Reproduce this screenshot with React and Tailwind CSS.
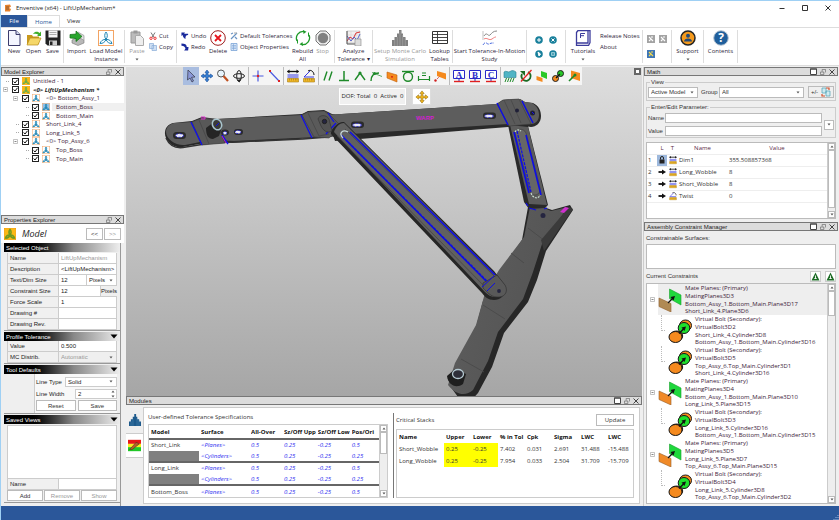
import React from "react";

const UI = "font-['Open_Sans','Noto_Sans',sans-serif]";
const TAHOMA = "font-['Liberation_Sans','Noto_Sans',sans-serif]";

/* ---------- small shared glyphs ---------- */

function Svg({ size = 16, box = 16, className = "", children }) {
  return (
    <svg width={size} height={size} viewBox={`0 0 ${box} ${box}`} fill="none" className={`block shrink-0 ${className}`} aria-hidden="true">
      {children}
    </svg>
  );
}

function Trefoil({ size = 8, bg = "#fff", edge = "#f3a464", color = "#1f86b4", weight = 1 }) {
  return (
    <Svg size={size}>
      <rect x="0.5" y="0.5" width="15" height="15" fill={bg} stroke={edge} />
      <g stroke={color} strokeWidth={weight}>
        <path d="M8 9.500C6.200 7 6.400 4 8 2c1.700 2 1.800 5 0 7.500Z" />
        <path d="M8 9.500c-1 2.700-3.200 4.100-6 4 .8-2.600 3-4.400 6-4Z" />
        <path d="M8 9.500c1 2.700 3.200 4.100 6 4-.8-2.600-3-4.400-6-4Z" />
      </g>
    </Svg>
  );
}

function Caret({ className = "" }) {
  return (
    <svg width="4" height="3" viewBox="0 0 4 3" className={`block shrink-0 ${className}`} aria-hidden="true">
      <path d="M0.500 0.500h3L2 2.500Z" fill="#555" />
    </svg>
  );
}

function WindowTools({ max }) {
  return (
    <span className="flex items-center gap-[3px]">
      {max && (
        <button type="button" aria-label="Maximize panel">
          <Svg size={7} box={7}><path d="M0.500 1h6v5.500h-6Z" stroke="#444" fill="#fff" /><path d="M0 1h7" stroke="#444" /></Svg>
        </button>
      )}
      <button type="button" aria-label="Float panel">
        <Svg size={6} box={7}><path d="M0.500 3.500h4v3h-4ZM2.500 3V0.500h4V4" stroke="#666" strokeWidth="0.800" /></Svg>
      </button>
      <button type="button" aria-label="Close panel">
        <Svg size={6} box={6}><path d="M0.500 0.500l5 5M5.500 0.500l-5 5" stroke="#444" /></Svg>
      </button>
    </span>
  );
}

function PanelTitle({ title, max }) {
  return (
    <div className={`flex h-[9px] shrink-0 items-center justify-between border border-[#777] bg-[#dcdcdc] px-[2px] text-[6px] leading-[8px] text-[#222] ${TAHOMA}`}>
      <h2>{title}</h2>
      <WindowTools max={max} />
    </div>
  );
}

function Select({ label, value, className = "", disabled }) {
  return (
    <span className={`relative flex items-center ${className}`}>
      <select aria-label={label} disabled={disabled} className="h-full w-full appearance-none bg-transparent pl-[2px] text-inherit outline-none">
        <option>{value}</option>
      </select>
      <Caret className="pointer-events-none absolute right-[3px]" />
    </span>
  );
}

function ScrollBar({ thumb }) {
  return (
    <div className="flex w-[8px] shrink-0 flex-col items-stretch border-l border-[#ccc] bg-[#eee]">
      <span className="flex h-[7px] items-center justify-center border border-[#bbb] bg-white">
        <Caret className="rotate-180" />
      </span>
      <span className={`border border-[#bbb] bg-white ${thumb}`} />
      <span className="flex-1" />
      <span className="flex h-[7px] items-center justify-center border border-[#bbb] bg-white">
        <Caret />
      </span>
    </div>
  );
}

/* ---------- ribbon ---------- */

const ribbonIcons = {
  new: <Svg><path d="M2.500 0.500h7.500l4 4v11h-11.500Z" fill="#f4f6ff" stroke="#3b3b6b" /><path d="M10 0.500v4h4" stroke="#3b3b6b" fill="#cfd6ee" /></Svg>,
  open: <Svg><path d="M1 5h5l1 1.500h6V14H1Z" fill="#c8981c" /><path d="M1 15l3-7h11l-3 7Z" fill="#f5d768" stroke="#b98d1c" strokeWidth="0.700" /><path d="M7 4c2-3 5-2.500 6.500-1L15 1.500V6h-4l1.300-1.300C11 3.500 9 3.500 7 4Z" fill="#3fae29" /></Svg>,
  save: <Svg><path d="M0.500 0.500h15v15h-13l-2-2Z" fill="#222" /><path d="M3.500 0.500h9v7h-9Z" fill="#f5f5f5" /><path d="M4.500 2.500h7M4.500 4.500h7" stroke="#999" strokeWidth="0.800" /><path d="M4 10.500h8v5H4Z" fill="#ccc" /><path d="M5 11.500h2.500v3.500H5Z" fill="#222" /></Svg>,
  import: <Svg><path d="M3 10l6-3 6 3v3l-6 2.500L3 13Z" fill="#b8b8b8" stroke="#777" strokeWidth="0.600" /><path d="M9 2l6 3.500V10" fill="#ddd" stroke="#888" strokeWidth="0.600" /><path d="M1 4.500l6-0.500V1l6 5.500-6 5V8.500L1 8Z" fill="#27a52c" stroke="#126b16" strokeWidth="0.700" /></Svg>,
  model: <Trefoil size={16} />,
  paste: <Svg><path d="M2 2h9v11H2Z" fill="#bbb" stroke="#999" /><path d="M4.500 0.500h4v3h-4Z" fill="#999" /><path d="M6.500 5.500h5l3 3v7h-8Z" fill="#eee" stroke="#aaa" /></Svg>,
  delete: <Svg><circle cx="8" cy="8" r="7.300" stroke="#9c1c1c" fill="#fff" /><path d="M5 5l6 6M11 5l-6 6" stroke="#e8141c" strokeWidth="1.800" /></Svg>,
  rebuild: <Svg><path d="M2 11a6.800 6.800 0 0 1 7-9.500M14 5a6.800 6.800 0 0 1-7 9.500" stroke="#1f9a2a" strokeWidth="1.300" /><path d="M8 0l3.500 1.800L8.500 4ZM8 16l-3.500-1.800L7.500 12Z" fill="#1f9a2a" /><path d="M13.500 2.500v4M2.500 9.500v4" stroke="#1f9a2a" /></Svg>,
  stop: <Svg><path d="M5 1h6l4 4v6l-4 4H5l-4-4V5Z" fill="#eee" stroke="#777" /><circle cx="8" cy="8" r="5.200" fill="#808080" /></Svg>,
  analyze: <Svg><path d="M1 1h13v12H1Z" fill="#f3f0f0" stroke="#bbb" strokeWidth="0.600" /><path d="M1 5h13M1 9h13M5 1v12M10 1v12" stroke="#ccc" strokeWidth="0.500" /><path d="M1 11l3-4 3 2 3-6 4-1" stroke="#d33" /><path d="M1 6l4 5 3-4 3 3 3-6" stroke="#56c" /><path d="M1 1v13h8" stroke="#555" /><path d="M9 9h6v7H9Z" fill="#ddd" stroke="#888" strokeWidth="0.600" /></Svg>,
  monte: <Svg><path d="M0 16v-6h2.500V7H5V3.500h2V0h2.500v3.500H11V7h2.500v3H16v6Z" fill="#808080" /><path d="M2.700 10v6M5.300 7v9M8 1v15M10.700 5v11M13.300 8v8" stroke="#aaa" strokeWidth="0.600" /></Svg>,
  lookup: <Svg><path d="M0.500 1.500h15v12h-15Z" fill="#fff" stroke="#333" /><path d="M0.500 4.500h15M0.500 7.500h15M0.500 10.500h15M5.500 1.500v12" stroke="#333" strokeWidth="0.900" /></Svg>,
  motion: <Svg><path d="M1 1v9" stroke="#999" strokeWidth="0.600" /><path d="M2 6c3-5 4 1 6-1s3-4 7-4" stroke="#888" /><path d="M2 9c3-2 5 2 8 0 2-1.500 3-2 4-2" stroke="#f08080" /><path d="M1 15c3-5 4 0 6-1s3-1 5-1" stroke="#4466dd" strokeDasharray="3 1" /></Svg>,
  tutorials: <Svg><path d="M1.500 2.500L3 0.500h12v12l-1.500 3h-12Z" fill="#fff" stroke="#3c3c9c" strokeWidth="1.300" /><path d="M13 1v12H2" stroke="#3c3c9c" strokeWidth="1.300" /><path d="M5.500 8V3.500H10M5.500 5.700H9" stroke="#3c3c9c" /></Svg>,
  support: <Svg><circle cx="8" cy="8" r="7" fill="#f59a1c" stroke="#252525" strokeWidth="1.500" /><circle cx="8" cy="5.700" r="2" fill="#234a78" /><path d="M4 11.500c0-4 8-4 8 0Z" fill="#234a78" /></Svg>,
  contents: <Svg><circle cx="8" cy="8" r="7.300" fill="#1f5f9c" stroke="#b9c6d4" /><text x="8" y="12.300" textAnchor="middle" fontSize="12" fontWeight="700" fill="#fff" fontFamily="Open Sans">?</text></Svg>,
};

function Big({ icon, lines, width, dim, drop }) {
  return (
    <button type="button" className={`flex shrink-0 flex-col items-center ${width} ${dim ? "text-[#999]" : "text-[#2f1f3c]"}`}>
      {ribbonIcons[icon]}
      <span className="mt-px flex flex-col items-center leading-[8px] whitespace-nowrap">
        {lines.map((l) => (
          <span key={l}>{l}</span>
        ))}
      </span>
      {drop && <Caret className="mt-[3px]" />}
    </button>
  );
}

function Small({ icon, text }) {
  return (
    <button type="button" className="flex h-[11px] items-center gap-[2px] text-left leading-[8px] whitespace-nowrap text-[#2f1f3c]">
      {icon}
      <span>{text}</span>
    </button>
  );
}

function Group({ width, children }) {
  return <div className={`flex shrink-0 items-start border-r border-[#ddd] ${width}`}>{children}</div>;
}

const cutIcon = <Svg size={8} box={8}><path d="M2 0.500l3 5M6 0.500l-3 5" stroke="#777" /><circle cx="2" cy="6.300" r="1.200" stroke="#e33" /><circle cx="6" cy="6.300" r="1.200" stroke="#e33" /></Svg>;
const copyIcon = <Svg size={8} box={8}><path d="M0.500 0.500h4v5h-4ZM3 2.500h4.500v5H3Z" fill="#cfe0f4" stroke="#8aaed8" strokeWidth="0.700" /></Svg>;
const undoIcon = <Svg size={8} box={9}><path d="M0.500 0.500h4L3.500 2H8v1.500C5.500 3.500 5 5 5 8 3 7 2 5.500 2 3.500L0.500 4.500Z" fill="#1a2a9c" /></Svg>;
const redoIcon = <Svg size={8} box={9}><path d="M0.500 0.500c4 0 6 1 6 4h2L8 8.500H3.500L5 6.500C5 4.500 3.500 3 0.500 3Z" fill="#1a2a9c" /></Svg>;
const tolIcon = <Svg size={8} box={8}><path d="M1 7l6-6M1 2l2-1M5 5l2 2" stroke="#6a94c4" strokeWidth="1.200" /><path d="M4 1h3" stroke="#aaa" /></Svg>;
const propIcon = <Svg size={8} box={8}><path d="M1 0.500h6v7H1Z" fill="#dbe8f8" stroke="#7aa3d6" strokeWidth="0.800" /><path d="M2 2.500h4M2 4h4M2 5.500h4M3.500 1v6" stroke="#7aa3d6" strokeWidth="0.600" /></Svg>;

function Disc({ label, children }) {
  return (
    <button type="button" aria-label={label}>
      <Svg size={8} box={8}><circle cx="4" cy="4" r="3.800" fill="#19809c" />{children}</Svg>
    </button>
  );
}

function Tile({ label, on }) {
  return (
    <button type="button" aria-label={label}>
      <Svg size={8} box={8}>
        <path d="M0 0h8v8H0Z" fill={on ? "#3f76b5" : "#a3a3a3"} />
        <path d="M2 2l4 4M4 2l2 0M2 6l2-2" stroke={on ? "#f8dc4a" : "#fff"} strokeWidth="1.100" />
      </Svg>
    </button>
  );
}

function Ribbon() {
  return (
    <div className="flex h-[39px] shrink-0 overflow-hidden border-y border-[#ddd] bg-white py-[2px] pl-[3px] text-[6px]">
      <Group width="w-[60px]">
        <Big icon="new" lines={["New"]} width="w-[20px]" />
        <Big icon="open" lines={["Open"]} width="w-[19px]" />
        <Big icon="save" lines={["Save"]} width="w-[19px]" />
      </Group>
      <Group width="w-[61px]">
        <Big icon="import" lines={["Import"]} width="w-[25px]" />
        <Big icon="model" lines={["Load Model", "Instance"]} width="w-[34px]" />
      </Group>
      <Group width="w-[52px]">
        <Big icon="paste" lines={["Paste"]} width="w-[24px]" dim drop />
        <div className="flex flex-col">
          <Small icon={cutIcon} text="Cut" />
          <Small icon={copyIcon} text="Copy" />
        </div>
      </Group>
      <Group width="w-[158px]">
        <div className="flex w-[29px] flex-col pl-[4px]">
          <Small icon={undoIcon} text="Undo" />
          <Small icon={redoIcon} text="Redo" />
        </div>
        <Big icon="delete" lines={["Delete"]} width="w-[24px]" />
        <div className="flex w-[62px] flex-col">
          <Small icon={tolIcon} text="Default Tolerances" />
          <Small icon={propIcon} text="Object Properties" />
        </div>
        <Big icon="rebuild" lines={["Rebuild", "All"]} width="w-[21px]" />
        <Big icon="stop" lines={["Stop"]} width="w-[19px]" dim />
      </Group>
      <Group width="w-[38px]">
        <Big icon="analyze" lines={["Analyze", "Tolerance ▾"]} width="w-[37px]" />
      </Group>
      <Group width="w-[80px]">
        <Big icon="monte" lines={["Setup Monte Carlo", "Simulation"]} width="w-[54px]" dim />
        <Big icon="lookup" lines={["Lookup", "Tables"]} width="w-[25px]" />
      </Group>
      <Group width="w-[74px]">
        <Big icon="motion" lines={["Start Tolerance-In-Motion", "Study"]} width="w-[73px]" />
      </Group>
      <Group width="w-[39px]">
        <div className="grid grid-cols-2 gap-[6px] pt-[6px] pl-[8px]">
          <Disc label="Add"><path d="M4 2v4M2 4h4" stroke="#fff" /></Disc>
          <Disc label="Remove"><path d="M2.500 2.500l3 3M5.500 2.500l-3 3" stroke="#fff" /></Disc>
          <Disc label="Pick"><path d="M3 2l2.500 2L4 6Z" fill="#fff" stroke="#fff" /></Disc>
          <Disc label="List"><path d="M2.500 2.500h3v3h-3ZM2.500 4h3" stroke="#bfe3ea" strokeWidth="0.700" /></Disc>
        </div>
      </Group>
      <Group width="w-[77px]">
        <Big icon="tutorials" lines={["Tutorials"]} width="w-[34px]" drop />
        <div className="flex flex-col">
          <Small text="Release Notes" />
          <Small text="About" />
        </div>
      </Group>
      <Group width="w-[29px]">
        <div className="grid grid-cols-2 gap-x-[4px] gap-y-[7px] pt-[5px] pl-[4px]">
          <Tile label="Tool one" />
          <Tile label="Tool two" />
          <Tile label="Tool three" on />
        </div>
      </Group>
      <Group width="w-[32px]">
        <Big icon="support" lines={["Support"]} width="w-[31px]" drop />
      </Group>
      <Group width="w-[34px]">
        <Big icon="contents" lines={["Contents"]} width="w-[33px]" />
      </Group>
    </div>
  );
}

/* ---------- left column ---------- */

const tree = [
  { pad: "pl-[10px]", name: "Untitled - 1", hot: true, gap: "pl-px" },
  { pad: "pl-[10px]", name: "<0> LiftUpMechanism *", hot: true, bold: true, node: true, gap: "pl-px" },
  { pad: "pl-[20px]", name: "<0> Bottom_Assy_1", node: true, gap: "pl-[4px]" },
  { pad: "pl-[30px]", name: "Bottom_Boss", sel: true, gap: "pl-[4px]" },
  { pad: "pl-[30px]", name: "Bottom_Main", gap: "pl-[4px]" },
  { pad: "pl-[20px]", name: "Short_Link_4", gap: "pl-[4px]" },
  { pad: "pl-[20px]", name: "Long_Link_5", gap: "pl-[4px]" },
  { pad: "pl-[20px]", name: "<0> Top_Assy_6", node: true, gap: "pl-[4px]" },
  { pad: "pl-[30px]", name: "Top_Boss", gap: "pl-[4px]" },
  { pad: "pl-[30px]", name: "Top_Main", gap: "pl-[4px]" },
];

function Expander({ className = "" }) {
  return <Svg size={5} box={5} className={className}><path d="M0.500 0.500h4v4h-4Z" fill="#fff" stroke="#aaa" strokeWidth="0.700" /><path d="M1.500 2.500h2" stroke="#555" strokeWidth="0.700" /></Svg>;
}

function ModelExplorer() {
  return (
    <section className="flex h-[148px] shrink-0 flex-col">
      <PanelTitle title="Model Explorer" />
      <ul className="grid min-h-0 flex-1 auto-rows-fr grid-cols-1 content-start bg-white pt-px pb-[52px] text-[6px] text-[#3c2238]">
        {tree.map((t) => (
          <li key={t.name} className={`relative flex items-center ${t.pad}`}>
            {t.node ? (
              <Expander className="-ml-[8px] mr-[3px]" />
            ) : (
              <span className="-ml-[5px] mr-[2px] w-[3px] border-t border-dotted border-[#aaa]" />
            )}
            <label className={`flex min-w-0 flex-1 items-center leading-[8px] whitespace-nowrap ${t.bold ? "font-bold italic text-[#222]" : ""}`}>
              <span className="relative mx-px size-[7px] shrink-0">
                <input type="checkbox" defaultChecked className="block size-[7px] appearance-none border border-[#222] bg-white" />
                <Svg size={7} box={7} className="pointer-events-none absolute inset-0"><path d="M1.700 3.500l1.300 1.500 2.500-3.200" stroke="#111" /></Svg>
              </span>
              <span className="ml-[2px] shrink-0">
                {t.hot ? <Trefoil size={8} bg="#fcb813" edge="#f5a000" color="#5fae50" weight={2} /> : <Trefoil size={8} bg={t.sel ? "#8fc0e8" : "#fff"} weight={2} />}
              </span>
              <span className={`ml-[2px] flex-1 ${t.gap} ${t.sel ? "bg-[#f0f0f0]" : ""}`}>{t.name}</span>
            </label>
          </li>
        ))}
      </ul>
    </section>
  );
}

function Band({ title, fold }) {
  return (
    <div className="flex h-[9px] shrink-0 items-center justify-between bg-linear-to-r from-black from-20% via-[#888] via-60% to-[#eee] px-[2px] leading-[8px] text-white">
      <h3>{title}</h3>
      {fold && <svg width="8" height="5" viewBox="0 0 8 5" aria-hidden="true"><path d="M0.500 0.500h7L4 4.500Z" fill="#000" /></svg>}
    </div>
  );
}

function Prop({ label, value, dim, extra, children }) {
  return (
    <div className="flex h-[11px] shrink-0 items-stretch border-b border-[#ccc]">
      <label htmlFor={`prop-${label}`} className="flex w-[52px] shrink-0 items-center border-x border-[#ccc] bg-[#f0f0f0] pl-[2px]">{label}</label>
      {children || (
        <input id={`prop-${label}`} defaultValue={value} disabled={dim} className={`min-w-0 flex-1 border-r border-[#ccc] bg-white pl-[2px] ${dim ? "text-[#999]" : ""}`} />
      )}
      {extra}
    </div>
  );
}

function PushButton({ children, dim, className = "" }) {
  return (
    <button type="button" className={`border border-[#bbb] bg-white text-center leading-[8px] ${dim ? "text-[#999]" : "text-[#333]"} ${className}`}>
      {children}
    </button>
  );
}

function PropertiesExplorer() {
  return (
    <section className="flex min-h-0 flex-1 flex-col">
      <PanelTitle title="Properties Explorer" />
      <div className={`flex min-h-0 flex-1 flex-col bg-[#efefef] text-[6px] leading-[8px] text-[#222] ${TAHOMA}`}>
        <div className="flex h-[19px] shrink-0 items-center bg-white pr-[3px] pl-[3px]">
          <Trefoil size={12} bg="#fcb813" edge="#f5a000" color="#6f9a20" weight={2} />
          <span className={`ml-[6px] flex-1 text-[9px] italic ${UI}`}>Model</span>
          <PushButton className="h-[12px] w-[17px]">&lt;&lt;</PushButton>
          <PushButton dim className="ml-px h-[12px] w-[17px]">&gt;&gt;</PushButton>
        </div>
        <div className="mr-[3px] ml-[3px] flex min-h-0 flex-1 flex-col gap-px border-r border-[#999] pb-[3px]">
          <div className="border-b border-[#999]">
            <Band title="Selected Object" />
            <div className="mx-[3px] mt-px">
              <Prop label="Name" value="LiftUpMechanism" dim />
              <Prop label="Description" value="<LiftUpMechanism>" />
              <Prop label="Text/Dim Size" value="12" extra={<Select label="Text unit" value="Pixels" className="w-[30px] border-r border-[#ccc] bg-white" />} />
              <Prop label="Constraint Size" value="12" extra={<span className="w-[16px] self-center text-center">Pixels</span>} />
              <Prop label="Force Scale" value="1" />
              <Prop label="Drawing #" value="" />
              <Prop label="Drawing Rev." value="" />
            </div>
          </div>
          <div className="border-b border-[#999]">
            <Band title="Profile Tolerance" fold />
            <div className="mx-[3px]">
              <Prop label="Value" value="0.500" />
              <Prop label="MC Distrib.">
                <Select label="MC Distrib." value="Automatic" disabled className="flex-1 border-r border-[#ccc] text-[#999]" />
              </Prop>
            </div>
          </div>
          <div className="border-b border-[#999]">
            <Band title="Tool Defaults" fold />
            <div className="mr-[3px] ml-[30px] flex flex-col gap-px border-l border-[#ccc] bg-[#f8f8f8] py-[2px] pl-px">
              <div className="flex h-[11px] items-center">
                <span className="w-[29px]">Line Type</span>
                <Select label="Line Type" value="Solid" className="h-[10px] flex-1 border border-[#ccc] bg-white" />
              </div>
              <div className="flex h-[11px] items-center">
                <label htmlFor="lw" className="w-[39px]">Line Width</label>
                <input id="lw" defaultValue="2" className="h-[10px] min-w-0 flex-1 border border-[#ccc] bg-white pl-[2px]" />
                <span className="-ml-[6px] mr-[2px] flex flex-col gap-[2px]"><Caret className="rotate-180" /><Caret /></span>
              </div>
              <div className="flex h-[11px] gap-[2px]">
                <PushButton className="flex-1">Reset</PushButton>
                <PushButton className="flex-1">Save</PushButton>
              </div>
            </div>
          </div>
          <div className="flex min-h-0 flex-1 flex-col border-b border-[#999]">
            <Band title="Saved Views" fold />
            <div className="mx-[3px] mt-px flex min-h-0 flex-1 flex-col pb-px">
              <div className="min-h-0 flex-1 border border-[#ccc] bg-white" />
              <Prop label="Name" value="" />
              <div className="flex h-[11px] shrink-0 gap-px">
                <PushButton className="flex-1">Add</PushButton>
                <PushButton dim className="flex-1">Remove</PushButton>
                <PushButton dim className="flex-1">Show</PushButton>
              </div>
            </div>
          </div>
        </div>
      </div>
    </section>
  );
}

/* ---------- viewport ---------- */

const datum = (c) => (
  <>
    <path d="M2.500 2.500h11v8h-11Z" fill="#fff" stroke="#2828c8" />
    <text x="8" y="9.800" textAnchor="middle" fontSize="9" fontWeight="700" fill="#2828c8" fontFamily="Liberation Serif">{c}</text>
    <path d="M8 10.500v3" stroke="#2828c8" />
    <path d="M3 13.500h10" stroke="#e02020" strokeWidth="1.400" />
  </>
);
const ruler = <path d="M2.500 10.500h11v3.500h-11ZM4.500 10.500v2M6.500 10.500v2M8.500 10.500v2M10.500 10.500v2M12 10.500v2" fill="#f0b828" stroke="#a67a10" strokeWidth="0.600" />;

const tools = [
  ["Select", <><path d="M5 2l7 7-3.500 0.300L10.500 13l-1.500 1-2-4-2.500 2Z" fill="#8a98d8" stroke="#334" strokeWidth="0.700" /></>, "on"],
  ["Pan", <path d="M8 2l2 2.500H9V7h2.500V6L14 8l-2.500 2V9H9v2.500h1L8 14l-2-2.500h1V9H4.500v1L2 8l2.500-2v1H7V4.500H6Z" fill="#3a80d0" stroke="#1a4f9c" strokeWidth="0.600" />],
  ["Zoom", <><circle cx="6" cy="5.500" r="3.500" stroke="#555" fill="#e8f4fc" /><path d="M8.500 8l4.500 5" stroke="#c05020" strokeWidth="2.200" /></>],
  ["Rotate", <><ellipse cx="8" cy="8" rx="2.300" ry="5.500" stroke="#222" /><ellipse cx="8" cy="8" rx="5.500" ry="2.300" stroke="#222" /><path d="M6 12l2.500 2.500L10 11Z" fill="#222" /></>, "sep"],
  ["Point", <><path d="M8 2.500v11M2.500 8h11" stroke="#4a5ae0" strokeWidth="1.200" /><circle cx="8" cy="8" r="1.200" fill="#e02020" /></>],
  ["Line", <><path d="M4 3.500l8.500 9" stroke="#4a5ae0" strokeWidth="1.200" /><path d="M3 2h2v2H3ZM12 12h2v2h-2Z" fill="#e02020" /></>, "sep"],
  ["Dimension", <><path d="M2.500 3.500h11" stroke="#111" strokeWidth="1.300" /><path d="M4.500 1.500L2 3.500l2.500 2ZM11.500 1.500L14 3.500l-2.500 2Z" fill="#111" /><path d="M2.500 7h11M2.500 9h11" stroke="#3a3ae0" />{ruler}</>],
  ["Angle", <><path d="M3 9h10M3 9l6-6" stroke="#3a3ae0" /><path d="M7 3c3-2 6 1 6 4" stroke="#111" />{ruler}</>, "sep"],
  ["Parallel", <path d="M4 12.500l3-9M9 12.500l3-9" stroke="#1f8a2a" strokeWidth="1.400" />],
  ["Perpendicular", <path d="M8 3v9M3 12.500h10" stroke="#1f8a2a" strokeWidth="1.500" />],
  ["Coincident", <><path d="M3 12l5-7 5 7" stroke="#1f8a2a" strokeWidth="1.400" /><circle cx="8" cy="5" r="1.600" fill="#1f8a2a" /></>],
  ["Tangent", <><path d="M3 13c0-5 2-8 8-8" stroke="#1f8a2a" strokeWidth="1.400" /><path d="M4 4.500l10 4" stroke="#1f8a2a" strokeWidth="0.700" /><circle cx="6.500" cy="5.500" r="1.500" fill="#1f8a2a" /></>],
  ["Plane", <><path d="M3 4l10 3v7L3 10Z" fill="#f58a1e" stroke="#c0600c" strokeWidth="0.600" /><circle cx="8" cy="8.800" r="0.900" fill="#d01010" /></>],
  ["Circle", <><path d="M2 3.500h12" stroke="#1f8a2a" strokeWidth="1.400" /><circle cx="8" cy="8.800" r="4.500" stroke="#1f8a2a" strokeWidth="1.400" /></>],
  ["Equal", <path d="M2.500 8v5M13.500 8v5M2.500 11.500h11M6 5h4M6 7.500h4" stroke="#1f8a2a" strokeWidth="1.200" />],
  ["Plane point", <><path d="M5 3l9 2.500v6L5 8Z" fill="#f58a1e" /><circle cx="3.500" cy="12.500" r="1.200" fill="#d02020" /><path d="M5 11l3-3" stroke="#d02020" strokeDasharray="1 1" /></>, "sep"],
  ["Datum A", datum("A")],
  ["Datum B", datum("B")],
  ["Datum C", datum("C"), "sep"],
  ["Ground", <><path d="M2 4c2-2 4 1 6-0.500s4-1 6 0.500v5.500H2Z" fill="#4fb4c4" stroke="#2a7f90" strokeWidth="0.600" /><path d="M3 14l1.500-4M5.500 14L7 10M8 14l1.500-4M10.500 14l1.500-4" stroke="#1f8a2a" /></>],
  ["No rotate", <><path d="M4 6a4.600 4.600 0 1 0 6-2" stroke="#1c6b24" strokeWidth="1.800" /><path d="M2 3h5v5Z" fill="#1c6b24" /><path d="M3 13.500L13.500 2" stroke="#e02020" strokeWidth="1.300" /></>],
  ["Mate", <><path d="M7 3l6 2v6L7 8.500Z" fill="#28c828" /><path d="M2.500 8l6 2v4l-6-2Z" fill="#f58a1e" /></>],
  ["Bolt", <><circle cx="5.500" cy="10.500" r="3" fill="#f58a1e" stroke="#222" /><circle cx="10.500" cy="5.500" r="3" fill="#28c828" stroke="#222" /><path d="M6 10l4-4" stroke="#111" strokeWidth="1.300" /></>],
  ["Axis", <><path d="M5 2.500l9 2.500v8L5 10Z" fill="#f58a1e" /><path d="M3 13l6-6" stroke="#1f8a2a" strokeWidth="1.600" /><circle cx="9" cy="7" r="1.500" fill="#1f8a2a" /></>],
];

function Mechanism() {
  return (
    <svg viewBox="126 67 516 329" preserveAspectRatio="xMinYMin slice" className="absolute inset-0 h-full w-full" role="img" aria-label="Lift mechanism model">
      <defs>
        <linearGradient id="arm" x1="0" y1="0" x2="1" y2="0.600">
          <stop offset="0" stopColor="#606060" />
          <stop offset="1" stopColor="#525252" />
        </linearGradient>
      </defs>
      {/* main rail, left section */}
      <path d="M165 133c0-6 4-9 8-10l19-2 10-4 15 2 85-5 6-3 16-1 8 4 8 2v20l-25 2-83 5-22-1-27 5c-10 2-19-7-18-15Z" fill="#282828" />
      <path d="M166 132c0-5 4-8 8-9l18-1 10-4 15 1 85-4 6-3 16-1 8 4 6 1v19l-21 2-83 4-24-1-25 5c-9 1-19-6-19-13Z" fill="#5c5c5c" />
      {/* main rail, right section */}
      <path d="M326 115l171-11 6-4 17-1 5 3 8 1c6 3 8 8 8 13 0 7-5 11-10 11l-7-1-16 1-173 14Z" fill="#2a2a2a" />
      <path d="M326 115l171-11 6-4 17-1 5 3 7 1c5 3 7 7 7 12 0 6-4 9-8 9l-7-1-16 1-173 11Z" fill="#5d5d5d" />
      <path d="M166 138c4 9 11 11 20 9l25-4 92-4 25-2" stroke="#333" fill="none" strokeWidth="1.500" />
      {/* left bracket */}
      <path d="M192 122l10-4 13 2 10 23-23 2Z" fill="#585858" stroke="#3a3a3a" strokeWidth="0.600" />
      <path d="M199 120l10 24" stroke="#444" strokeWidth="0.700" />
      <path d="M191 122l11 23M222 135l6 9" stroke="#1010e8" strokeWidth="1.400" />
      <path d="M222 136l4 7" stroke="#c020c0" />
      <path d="M201 117h4v2h-4" stroke="#e030d0" fill="none" />
      {/* round boss */}
      <path d="M206 128l8-6 8 5-3 9-6 3c-5 0-7-4-7-11Z" fill="#252525" />
      <ellipse cx="217" cy="124.500" rx="4.500" ry="5.500" fill="#3a3a3a" stroke="#a9c4cc" strokeWidth="1.500" transform="rotate(-25 217 124.500)" />
      <path d="M216 126l3-3" stroke="#1010e8" />
      {/* slots */}
      <g fill="#2b2b2b">
        <rect x="173" y="132" width="13" height="7" rx="3.500" />
        <ellipse cx="225" cy="132.500" rx="4" ry="3" />
        <rect x="234" y="129" width="9" height="6" rx="3" />
        <rect x="351" y="121.500" width="13" height="6.500" rx="3" />
        <rect x="483" y="112.500" width="13" height="6.500" rx="3" />
      </g>
      <g fill="#e8e8f8" stroke="#1010e8" strokeWidth="0.700" strokeDasharray="2 1.500">
        <ellipse cx="179.500" cy="135.500" rx="4" ry="1.800" />
        <ellipse cx="225" cy="133" rx="2" ry="1.500" />
        <ellipse cx="238" cy="132" rx="3" ry="1.600" />
        <ellipse cx="357" cy="125" rx="4.500" ry="1.600" />
        <ellipse cx="489" cy="116" rx="4.500" ry="1.600" />
      </g>
      {/* centre bracket */}
      <path d="M302 115l6-3 16-1 7 5 11 11-13 11-15-1Z" fill="#5a5a5a" stroke="#3b3b3b" strokeWidth="0.600" />
      <path d="M308 113l11 23 10-2" stroke="#444" fill="none" strokeWidth="0.700" />
      <path d="M301 115l11 23M328 113l6 9M326 134l10-11" stroke="#1010e8" strokeWidth="1.300" />
      {/* lower arm */}
      <path d="M528 207l7-3 17 6 18-5 3 5-27 41-9 29-9 22-24 31-12 34-14 26c-6 8-13 8-20 4l-8-11 4-17 21-38 8-30 14-24 25-37Z" fill="#272727" />
      <path d="M530 207l7-2 14 6 17-4-26 37-9 28-10 27-25 33-10 29-15 29c-7 6-16 6-25-5l7-22 21-38 9-32 14-23 25-33Z" fill="url(#arm)" />
      <path d="M528 228l17 13M511 253l13 10M483 305l22 14M461 359l23 13" stroke="#484848" strokeWidth="0.800" />
      <path d="M541 240l28-33 4 2-29 42Z" fill="#3b3b3b" />
      <circle cx="543" cy="215.500" r="2.500" fill="#252540" />
      <path d="M560 212l5-5 4 1-5 5Z" fill="#d030d0" />
      {/* long link */}
      <path d="M331 134c-1-4 7-13 13-12l150 149 10 13c4 8-2 16-10 16-6 0-9-3-12-7Z" fill="#262626" />
      <path d="M334 132c1-4 5-9 10-9l149 149 11 13c3 6-1 12-8 12-5 0-8-2-11-5Z" fill="#606060" />
      <path d="M345 129l151 149M337 136l150 153" stroke="#424242" strokeWidth="0.700" />
      <path d="M350 132l145 143M341 135l147 148" stroke="#0d0de6" strokeWidth="1.500" />
      <path d="M346 140l141 141" stroke="#0d0de6" strokeWidth="1.300" strokeDasharray="3 1" />
      <path d="M343 138c-5-5 0-9 5-6" stroke="#c8d8d8" strokeWidth="1.200" fill="none" />
      <path d="M318 119c1-4 8-5 11 0l3 12c-5 3-9-1-11-5Z" fill="#535353" stroke="#333" strokeWidth="0.600" />
      <circle cx="324.500" cy="121.500" r="2.200" fill="#252540" stroke="#222" />
      <path d="M483 283l14-8 8 10c4 7-1 13-8 12-6 0-10-5-14-9Z" fill="#595959" stroke="#333" strokeWidth="0.700" />
      <path d="M482 287l12-11M487 291l8-8" stroke="#0d0de6" />
      <circle cx="499" cy="291" r="1.900" fill="#252540" />
      {/* short link */}
      <path d="M508 125l20 1 20 79-3 3-16 1-5-7Z" fill="#292929" />
      <path d="M510 125l18 2 19 78-18-1Z" fill="#5c5c5c" />
      <path d="M515 133c1-5 9-5 11 0l14 55c1 8-8 9-10 4Z" fill="#666" stroke="#444" strokeWidth="0.700" />
      <path d="M514 132l15 61M526 135l15 60" stroke="#0d0de6" strokeWidth="1.600" />
      <path d="M517 131l14 61" stroke="#0d0de6" strokeWidth="1.200" strokeDasharray="3 1" />
      <path d="M515 132c1-2 3-3 6-1M531 193c2 6 8 6 9 2" stroke="#c8dcd0" strokeWidth="1.200" fill="none" strokeDasharray="2 1" />
      <path d="M526 203l2 3M529 208l7 2M544 209l3-1" stroke="#0d0de6" strokeWidth="1.300" />
      {/* right bracket */}
      <path d="M497 104l6-4 16-1 12 25-22 2Z" fill="#5a5a5a" stroke="#404040" strokeWidth="0.600" />
      <path d="M504 100l11 24M511 100l10 23" stroke="#454545" strokeWidth="0.700" />
      <path d="M497 103l11 22M522 101l11 22" stroke="#0d0de6" strokeWidth="1.500" />
      <circle cx="517" cy="110.500" r="2" fill="#202038" />
      <circle cx="532.500" cy="113" r="2.500" fill="#202038" />
      <path d="M532 112l2 2" stroke="#1010e8" />
      {/* lower boss */}
      <path d="M447 376l8-7 11 5-3 10c-7 5-15 1-16-8Z" fill="#1e1e1e" />
      <ellipse cx="458" cy="374" rx="5.500" ry="4.500" fill="#2e2e38" stroke="#b4c8d0" strokeWidth="1.300" />
      <text x="416" y="120" fontSize="6" fontWeight="700" fill="#d020d0" fontFamily="Liberation Sans">WARP</text>
    </svg>
  );
}

function Viewport() {
  return (
    <section className="relative min-h-0 flex-1 overflow-hidden bg-linear-to-b from-[#dedede] to-[#a6a6a6]">
      <Mechanism />
      <div className="relative flex items-start pl-[57px]">
        <div className="flex items-center bg-[#f5f5f5]">
          {tools.map(([label, art, mode]) => (
            <button key={label} type="button" aria-label={label} className={`py-px ${mode === "on" ? "bg-[#a9bde0]" : ""} ${mode === "sep" ? "mr-px border-r border-[#bbb] pr-px" : ""}`}>
              <Svg>{art}</Svg>
            </button>
          ))}
        </div>
        <button type="button" aria-label="Restore view" className="mt-px mr-px ml-auto size-[7px] border-2 border-[#666] bg-white" />
      </div>
      <div className="relative flex items-start gap-[6px] pt-[3px] pl-[213px]">
        <output className="flex h-[17px] w-[67px] items-center justify-center border border-white bg-[#f0f0f0] text-[6px] whitespace-nowrap text-[#222]">
          DOF: Total&nbsp; 0&nbsp; Active&nbsp; 0
        </output>
        <button type="button" aria-label="Move part" className="flex h-[17px] w-[19px] items-center justify-center border border-[#ddd] bg-white">
          <Svg size={14}>
            <path d="M8 1l2.500 3H9v3h3V5.500L15 8l-3 2.500V9H9v3h1.500L8 15l-2.500-3H7V9H4v1.500L1 8l3-2.500V7h3V4H5.500Z" fill="#f4b61c" stroke="#8a6a10" strokeWidth="0.600" />
          </Svg>
        </button>
      </div>
    </section>
  );
}

/* ---------- modules ---------- */

const specs = [
  ["Short_Link", "<Planes>", "0.5", "0.25", "-0.25", "0.5"],
  ["", "<Cylinders>", "0.5", "0.25", "-0.25", "0.25"],
  ["Long_Link", "<Planes>", "0.5", "0.25", "-0.25", "0.5"],
  ["", "<Cylinders>", "0.5", "0.25", "-0.25", "0.25"],
  ["Bottom_Boss", "<Planes>", "0.5", "0.25", "-0.25", "0.5"],
];

const stacks = [
  ["Short_Wobble", "0.25", "-0.25", "7.402", "0.031", "2.691", "31.488", "-15.488"],
  ["Long_Wobble", "0.25", "-0.25", "7.954", "0.033", "2.504", "31.709", "-15.709"],
];

function Modules() {
  return (
    <section className="flex h-[110px] shrink-0 flex-col bg-[#efefef]">
      <PanelTitle title="Modules" max />
      <div className="flex min-h-0 flex-1 pt-[2px] pr-[2px] pb-[2px]">
        <div className="flex w-[17px] shrink-0 flex-col items-center">
          <button type="button" aria-label="Histogram" className="flex h-[26px] w-full items-center justify-center">
            <Svg size={12}><path d="M0 16v-6h2.500V7H5V3.500h2V0h2.500v3.500H11V7h2.500v3H16v6Z" fill="#1d5a8c" /><path d="M2.700 10v6M5.300 7v9M10.700 5v11M13.300 8v8" stroke="#5a93bd" strokeWidth="0.600" /></Svg>
          </button>
          <button type="button" aria-label="Tolerances" className="flex h-[25px] w-full items-center justify-center border-y border-[#ccc] bg-white">
            <Svg size={13}><path d="M0 1h16v5H0Z" fill="#e81818" /><path d="M0 6h16v4H0Z" fill="#f8ee20" /><path d="M0 10h16v5H0Z" fill="#20c828" /><path d="M2 13l8-9 4 2-9 7Z" fill="#b0602c" stroke="#5a2c10" strokeWidth="0.700" /></Svg>
          </button>
        </div>
        <div className="flex min-w-0 flex-1 border border-[#ccc] bg-white text-[6px] text-[#333]">
          <div className="flex min-w-0 flex-1 flex-col pt-[5px] pr-[5px] pb-[5px] pl-[4px]">
            <h3 className="h-[11px] leading-[8px] whitespace-nowrap">User-defined Tolerance Specifications</h3>
            <div className="flex min-h-0 flex-1 border border-[#ccc]">
              <table className="h-full flex-1 table-fixed border-collapse text-left leading-[8px]">
                <colgroup>
                  <col className="w-[50px]" /><col className="w-[50px]" /><col className="w-[33px]" /><col className="w-[33px]" /><col className="w-[33px]" /><col />
                </colgroup>
                <thead>
                  <tr className="h-[14px] border-b-2 border-[#666] text-[#111]">
                    {["Model", "Surface", "All-Over", "Sz/Off Upp", "Sz/Off Low", "Pos/Ori"].map((h) => (
                      <th key={h} className="pl-[2px] font-bold whitespace-nowrap"><span className="block overflow-hidden">{h}</span></th>
                    ))}
                  </tr>
                </thead>
                <tbody>
                  {specs.map((r, i) => (
                    <tr key={i} className={r[0] ? "" : "border-b-2 border-[#666]"}>
                      {r.map((c, j) => (
                        <td key={j} className={`pl-[2px] ${j ? "text-[#3030f0] italic" : c ? "" : "bg-[#808080]"}`}>{c}</td>
                      ))}
                    </tr>
                  ))}
                </tbody>
              </table>
              <ScrollBar thumb="h-[22px]" />
            </div>
          </div>
          <div className="my-[5px] w-px shrink-0 bg-[#777]" />
          <div className="flex w-[245px] shrink-0 flex-col pt-[6px] pr-[5px] pb-[5px] pl-[2px]">
            <div className="mb-[3px] flex h-[12px] items-center justify-between">
              <h3>Critical Stacks</h3>
              <PushButton className="h-[12px] w-[38px]">Update</PushButton>
            </div>
            <div className="min-h-0 flex-1 border border-[#ccc]">
              <table className="w-full table-fixed text-left leading-[8px]">
                <colgroup>
                  <col className="w-[47px]" /><col span="7" />
                </colgroup>
                <thead>
                  <tr className="h-[13px] text-[#111]">
                    {["Name", "Upper", "Lower", "% in Tol", "Cpk", "Sigma", "LWC", "LWC"].map((h, i) => (
                      <th key={i} className="pl-[2px] font-bold whitespace-nowrap">{h}</th>
                    ))}
                  </tr>
                </thead>
                <tbody>
                  {stacks.map((r) => (
                    <tr key={r[0]} className="h-[12px]">
                      {r.map((c, j) => (
                        <td key={j} className={`pl-[2px] ${j === 1 || j === 2 ? "bg-[#ffff00]" : ""}`}>{c}</td>
                      ))}
                    </tr>
                  ))}
                </tbody>
              </table>
            </div>
          </div>
        </div>
      </div>
    </section>
  );
}

/* ---------- right column ---------- */

const params = [
  ["1", "lock", "Dim1", "355.508857368"],
  ["2", "arrow", "Long_Wobble", "8"],
  ["3", "arrow", "Short_Wobble", "8"],
  ["4", "arrow", "Twist", "0"],
];

function MathPanel() {
  return (
    <section className="flex h-[155px] shrink-0 flex-col">
      <PanelTitle title="Math" max />
      <div className={`flex min-h-0 flex-1 flex-col px-[2px] pt-[2px] pb-[3px] text-[6px] leading-[8px] text-[#333] ${TAHOMA}`}>
        <fieldset className="h-[23px] shrink-0 border border-[#ccc]">
          <legend className="ml-[3px] px-px leading-[8px]">View</legend>
          <div className="flex h-[12px] items-center px-px">
            <Select label="View" value="Active Model" className="h-[11px] w-[50px] border border-[#bbb] bg-white" />
            <span className="ml-[3px] w-[18px]">Group</span>
            <Select label="Group" value="All" className="h-[11px] flex-1 border border-[#bbb] bg-white" />
            <span className="ml-[4px] flex h-[12px] w-[26px] items-center justify-center gap-[3px] border border-[#bbb]">
              <button type="button">+/-</button>
              <button type="button" aria-label="Swap"><Svg size={10} box={10}><path d="M1 1h4v5H1ZM5 4h4v5H5Z" fill="#cfeaf0" stroke="#4aa0b4" strokeWidth="0.700" /><path d="M5 1h3v2M4 9H1V7" stroke="#d0502c" strokeWidth="1.200" /></Svg></button>
            </span>
          </div>
        </fieldset>
        <fieldset className="mt-[2px] h-[35px] shrink-0 border border-[#ccc]">
          <legend className="ml-[3px] px-px leading-[8px]">Enter/Edit Parameter:</legend>
          <div className="flex items-center gap-[2px] px-px pt-[2px]">
            <div className="flex flex-1 flex-col gap-[3px]">
              {["Name", "Value"].map((n) => (
                <label key={n} className="flex h-[10px] items-center">
                  <span className="w-[17px]">{n}</span>
                  <input className="h-[10px] min-w-0 flex-1 border border-[#bbb] bg-white px-[2px]" />
                </label>
              ))}
            </div>
            <button type="button" aria-label="Recent" className="flex size-[10px] items-center justify-center border border-[#bbb] bg-white"><Caret /></button>
          </div>
        </fieldset>
        <div className={`mt-[4px] flex min-h-0 flex-1 border border-[#bbb] bg-white ${UI}`}>
          <div className="flex-1">
            <table className="w-full table-fixed">
              <colgroup>
                <col className="w-[10px]" /><col className="w-[10px]" /><col className="w-[11px]" /><col className="w-[49px]" /><col />
              </colgroup>
              <thead>
                <tr className="h-[11px] text-[#5a2a48]">
                  {["", "L", "T", "Name", "Value"].map((h) => (
                    <th key={h} className="border-b border-[#eee] font-normal">{h}</th>
                  ))}
                </tr>
              </thead>
              <tbody>
                {params.map(([n, kind, name, value]) => (
                  <tr key={n} className="h-[12px] [&>td]:border-b [&>td]:border-[#eee]">
                    <td className="pl-px">{n}</td>
                    <td className={kind === "lock" ? "bg-[#9db8dc]" : ""}>
                      {kind === "lock" ? (
                        <Svg size={8} box={8} className="mx-auto"><path d="M1.500 3.500h5v4h-5Z" fill="#222" /><path d="M2.500 3.500V2a1.500 1.500 0 0 1 3 0v1.500" stroke="#222" /></Svg>
                      ) : (
                        <Svg size={8} box={8} className="mx-auto"><path d="M0.500 4h4" stroke="#111" strokeWidth="1.800" /><path d="M4 1.500L8 4 4 6.500Z" fill="#111" /></Svg>
                      )}
                    </td>
                    <td>
                      <Svg size={10} className="mx-auto">{name === "Twist" ? tools[7][1] : tools[6][1]}</Svg>
                    </td>
                    <td className="pl-px">{name}</td>
                    <td className="pl-[2px]">{value}</td>
                  </tr>
                ))}
              </tbody>
            </table>
          </div>
          <ScrollBar thumb="flex-[20]" />
        </div>
      </div>
    </section>
  );
}

const constraints = [
  ["plane", ["Mate Planes: (Primary)", "MatingPlanes3D3", "Bottom_Assy_1.Bottom_Main.Plane3D17", "Short_Link_4.Plane3D6"], "#b08a54"],
  ["bolt", ["Virtual Bolt (Secondary):", "VirtualBolt3D2", "Short_Link_4.Cylinder3D8", "Bottom_Assy_1.Bottom_Main.Cylinder3D16"]],
  ["bolt", ["Virtual Bolt (Secondary):", "VirtualBolt3D5", "Top_Assy_6.Top_Main.Cylinder3D1", "Short_Link_4.Cylinder3D16"]],
  ["plane", ["Mate Planes: (Primary)", "MatingPlanes3D4", "Bottom_Assy_1.Bottom_Main.Plane3D10", "Long_Link_5.Plane3D15"], "#f08a28"],
  ["bolt", ["Virtual Bolt (Secondary):", "VirtualBolt3D3", "Long_Link_5.Cylinder3D16", "Bottom_Assy_1.Bottom_Main.Cylinder3D15"]],
  ["plane", ["Mate Planes: (Primary)", "MatingPlanes3D5", "Long_Link_5.Plane3D7", "Top_Assy_6.Top_Main.Plane3D15"], "#f08a28"],
  ["bolt", ["Virtual Bolt (Secondary):", "VirtualBolt3D4", "Long_Link_5.Cylinder3D8", "Top_Assy_6.Top_Main.Cylinder3D2"]],
];

function ConstraintIcon({ kind, color }) {
  if (kind === "plane") {
    return (
      <Svg size={24} box={24} className="mr-[3px]">
        <path d="M11.500 1L23 7v10L11.500 10.500Z" fill="#1fd83c" stroke="#18a02c" strokeWidth="0.600" />
        <path d="M1 10l12 5.500V24L1 18.500Z" fill={color} stroke="#94602c" strokeWidth="0.600" />
        <path d="M10 15l5-5" stroke="#111" strokeWidth="1.300" />
        <path d="M12.500 9l4.500-1-1.500 4.500Z" fill="#111" />
      </Svg>
    );
  }
  return (
    <Svg size={24} box={24} className="mr-[3px]">
      <g stroke="#181818" strokeWidth="1">
        <ellipse cx="17.500" cy="6.500" rx="6" ry="5.500" fill="#f58a1e" />
        <ellipse cx="16" cy="9" rx="5.800" ry="5.500" fill="#1ee02c" />
        <ellipse cx="8.500" cy="17" rx="6.200" ry="5" fill="#c4640c" />
        <ellipse cx="7.500" cy="18" rx="6.500" ry="5.500" fill="#f58a1e" />
      </g>
      <path d="M11 14.500l5-5" stroke="#111" strokeWidth="1.400" />
      <path d="M13.500 8.500l4.500-1-1.500 4.500Z" fill="#111" />
    </Svg>
  );
}

function ConstraintManager() {
  return (
    <section className="flex min-h-0 flex-1 flex-col">
      <PanelTitle title="Assembly Constraint Manager" max />
      <div className={`flex min-h-0 flex-1 flex-col px-[2px] pt-[3px] pb-[2px] text-[6px] leading-[8px] text-[#333] ${TAHOMA}`}>
        <h3>Constrainable Surfaces:</h3>
        <div className="mt-[2px] h-[25px] shrink-0 border border-[#bbb] bg-white" />
        <div className="flex h-[14px] shrink-0 items-center gap-[4px]">
          <h3 className="flex-1">Current Constraints</h3>
          {["Add constraint", "Add second constraint"].map((l) => (
            <button key={l} type="button" aria-label={l} className="flex size-[11px] items-center justify-center border border-[#ccc] bg-white">
              <Svg size={9} box={9}><path d="M4.500 0.500L8.500 8.500H0.500Z" fill="#1b6b24" /><path d="M4.500 3.500v3M3.300 6.500h2.400" stroke="#fff" strokeWidth="0.900" /></Svg>
            </button>
          ))}
        </div>
        <div className={`flex min-h-0 flex-1 overflow-hidden border border-[#bbb] bg-white text-[#3c2238] ${UI}`}>
          <ul className="min-w-0 flex-1">
            {constraints.map(([kind, lines, color], i) => (
              <li key={lines[1]} className={`flex h-[31px] ${kind === "plane" ? "pl-[3px]" : "pl-[14px]"}`}>
                {kind === "plane" ? (
                  <Expander className="mr-[3px] self-center" />
                ) : (
                  <span className="mr-[3px] h-[16px] w-[4px] border-b border-l border-dotted border-[#bbb]" />
                )}
                <div className={`flex min-w-0 flex-1 items-center ${i === 0 ? "bg-[#eee]" : ""}`}>
                  <ConstraintIcon kind={kind} color={color} />
                  <div className="grid h-full auto-rows-fr whitespace-nowrap">
                    {lines.map((l) => (
                      <span key={l} className="leading-[8px]">{l}</span>
                    ))}
                  </div>
                </div>
              </li>
            ))}
          </ul>
          <ScrollBar thumb="h-[25px]" />
        </div>
      </div>
    </section>
  );
}

/* ---------- window ---------- */

export default function App() {
  return (
    <div className={`flex h-screen flex-col overflow-hidden border-t border-l border-[#9fd0f4] bg-[#efefef] text-[#222] ${UI}`}>
      <header className="flex h-[14px] shrink-0 items-center bg-white pr-[8px] pl-[3px] text-[6px]">
        <Svg size={8} box={8}><path d="M1 1l5-0.500 1 2-2 1.500 2 1-1 2.500H1Z" fill="#e8822a" /><path d="M2 3h3M2 5h3" stroke="#5a4a3a" strokeWidth="0.700" /></Svg>
        <h1 className="ml-[4px] flex-1">Enventive (x64) - LiftUpMechanism*</h1>
        <div className="flex items-center gap-[17px]">
          <button type="button" aria-label="Minimize"><Svg size={6} box={6}><path d="M0.500 3.500h5" stroke="#333" /></Svg></button>
          <button type="button" aria-label="Maximize"><Svg size={6} box={6}><path d="M0.500 0.500h5v5h-5Z" stroke="#333" /></Svg></button>
          <button type="button" aria-label="Close"><Svg size={6} box={6}><path d="M0.500 0.500l5 5M5.500 0.500l-5 5" stroke="#333" /></Svg></button>
        </div>
      </header>
      <nav className="flex h-[12px] shrink-0 bg-white text-[6px] leading-[12px]">
        <button type="button" className="w-[26px] bg-[#2b579a] text-white">File</button>
        <button type="button" className="w-[33px] border-x border-t border-[#ddd] text-[#2b579a]">Home</button>
        <button type="button" className="w-[27px]">View</button>
      </nav>
      <Ribbon />
      <main className="flex min-h-0 flex-1 pt-px">
        <div className="flex w-[123px] shrink-0 flex-col">
          <ModelExplorer />
          <PropertiesExplorer />
        </div>
        <div className="ml-[2px] flex min-w-0 flex-1 flex-col">
          <Viewport />
          <Modules />
        </div>
        <div className="ml-px flex w-[196px] shrink-0 flex-col border-l border-[#ccc] pr-px">
          <MathPanel />
          <ConstraintManager />
        </div>
      </main>
      <footer className="flex h-[14px] shrink-0 items-end justify-end bg-[#2b579a]">
        <Svg size={6} box={6}><path d="M5 1v1M5 3v1M3 3v1M5 5v1M3 5v1M1 5v1" stroke="#9db8dc" /></Svg>
      </footer>
    </div>
  );
}
